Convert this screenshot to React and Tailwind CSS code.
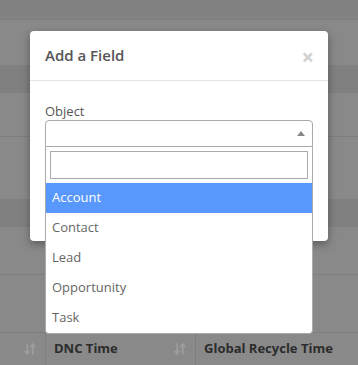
import React from 'react';

const options = ['Account', 'Contact', 'Lead', 'Opportunity', 'Task'];

// little up/down sort glyph used in the table header
const SortIcon = () => (
  <svg width="12" height="12" viewBox="0 0 12 12" className="text-[#9d9d9d]">
    <path d="M3.2 0.5v10M0.8 7.8L3.2 11l2.4-3.2" stroke="currentColor" strokeWidth="1.8" fill="none" />
    <path d="M8.8 11.5v-10M6.4 4.2L8.8 1l2.4 3.2" stroke="currentColor" strokeWidth="1.8" fill="none" />
  </svg>
);

const App = () => {
  return (
    <div
      className="relative w-[358px] h-[365px] overflow-hidden bg-[#898989]"
      style={{ fontFamily: '"Open Sans", "Liberation Sans", sans-serif' }}
    >
      {/* page behind the backdrop */}
      <div className="flex flex-col">
        <div className="h-[20px] bg-[#828282] border-b border-[#7d7d7d]" />
        <div className="h-[45px]" />
        <div className="h-[28px] bg-[#808080]" />
        <div className="h-[44px] border-b border-[#7e7e7e]" />
        <div className="h-[62px]" />
        <div className="h-[28px] bg-[#808080]" />
        <div className="h-[48px] border-b border-[#7e7e7e]" />
        <div className="h-[58px] border-b border-[#7e7e7e]" />
        <div className="h-[32px] flex text-[13px] font-bold text-[#2c2c2c]">
          <div className="w-[45px] flex items-center justify-end pr-[9px]">
            <SortIcon />
          </div>
          <div className="w-[150px] border-l border-[#7e7e7e] flex items-center justify-between pl-[8px] pr-[9px]">
            <span>DNC Time</span>
            <SortIcon />
          </div>
          <div className="flex-1 border-l border-[#7e7e7e] flex items-center pl-[8px] whitespace-nowrap">
            <span>Global Recycle Time</span>
          </div>
        </div>
      </div>

      {/* modal */}
      <div className="absolute left-[30px] top-[31px] w-[298px] h-[210px] bg-white rounded-[4px] shadow-[0_3px_9px_rgba(0,0,0,0.35)]">
        <div className="h-[50px] px-[15px] flex items-center justify-between border-b border-[#e5e5e5]">
          <h4 className="text-[15px] font-semibold text-[#555]">Add a Field</h4>
          <span className="text-[22px] leading-none font-bold text-[#d0d0d0] -mr-[1px]">×</span>
        </div>
        <div className="px-[15px] pt-[21px]">
          <label className="block text-[13px] leading-[18px] text-[#555]">Object</label>
          <div className="relative">
            <div className="h-[27px] border border-[#aaa] rounded-t-[4px] flex items-center justify-end pr-[7px]">
              <span className="w-0 h-0 border-l-[4px] border-r-[4px] border-b-[5px] border-l-transparent border-r-transparent border-b-[#888]" />
            </div>
            <div className="absolute left-0 right-0 top-[27px] bg-white border border-t-0 border-[#aaa] rounded-b-[4px]">
              <div className="p-[4px]">
                <div className="h-[28px] border border-[#aaa]" />
              </div>
              {options.map((opt, i) => (
                <div
                  key={opt}
                  className={
                    i === 0
                      ? 'h-[30px] px-[6px] flex items-center text-[13px] bg-[#5897fb] text-white'
                      : 'h-[30px] px-[6px] flex items-center text-[13px] text-[#666]'
                  }
                >
                  {opt}
                </div>
              ))}
            </div>
          </div>
        </div>
      </div>
    </div>
  );
};

export default App;
